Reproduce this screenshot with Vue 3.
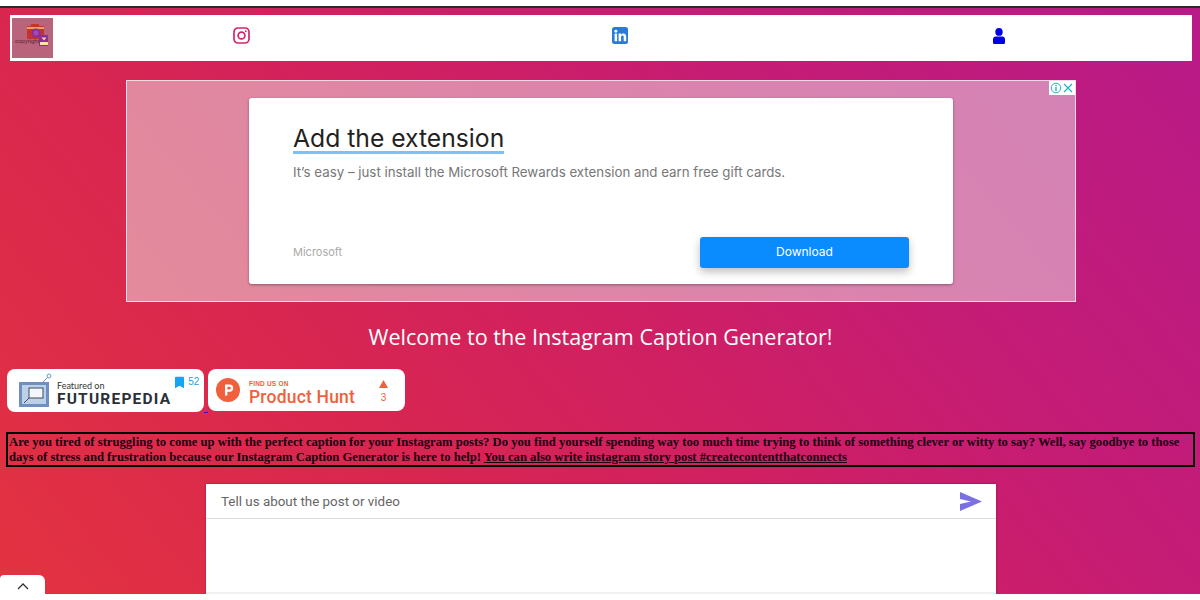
<template>
  <div class="page">
    <div class="top-strip"></div>
    <main class="main">
      <nav class="nav">
        <div class="logo">
          <svg width="41" height="40" viewBox="0 0 41 40">
            <rect x="15" y="8" width="17" height="13" rx="1" fill="#c8322c" />
            <rect x="19" y="6" width="8" height="3" fill="#c8322c" />
            <rect x="15" y="9" width="17" height="2" fill="#e8a25c" />
            <circle cx="24" cy="15" r="4.500" fill="#8a2f9a" />
            <circle cx="24" cy="15" r="2.500" fill="#a34ab0" />
            <rect x="27" y="17" width="9" height="11" fill="#8a2f9a" />
            <rect x="28" y="24" width="8" height="3" fill="#fbe3a8" />
            <path d="M29.500 19.500h5l-2.500 3z" fill="#f5d58a" />
            <text x="3" y="25" class="logo-text">copyright</text>
          </svg>
        </div>
        <div class="nav-item">
          <svg width="17" height="17" viewBox="0 0 17 17" fill="none" stroke="#d6246e" stroke-width="1.700">
            <rect x="1" y="1" width="15" height="15" rx="4" />
            <circle cx="8.500" cy="8.500" r="3.400" />
            <circle cx="12.800" cy="4.200" r=".9" fill="#d6246e" stroke="none" />
          </svg>
        </div>
        <div class="nav-item">
          <svg width="16" height="17" viewBox="0 0 16 17">
            <rect width="16" height="17" rx="2.500" fill="#2a79dc" />
            <rect x="2.600" y="6.600" width="2.500" height="7.600" fill="#fff" />
            <circle cx="3.850" cy="4.200" r="1.450" fill="#fff" />
            <path d="M6.600 6.600h2.400v1.100c.5-.8 1.300-1.300 2.400-1.300 2 0 2.800 1.300 2.800 3.400v4.400h-2.500v-4c0-1-.3-1.700-1.200-1.700-1 0-1.400.7-1.400 1.700v4H6.600z" fill="#fff" />
          </svg>
        </div>
        <div class="nav-item">
          <svg width="12" height="16" viewBox="0 0 12 16" fill="#0000e6">
            <ellipse cx="6" cy="3.900" rx="3.700" ry="3.900" />
            <path d="M2.600 8.400h6.800c1.500 0 2.600 1.200 2.600 2.800v3.200c0 .9-.6 1.600-1.500 1.600h-9C.6 16 0 15.300 0 14.400v-3.200c0-1.600 1.100-2.800 2.600-2.800z" />
          </svg>
        </div>
      </nav>

      <section class="ad">
        <div class="ad-badge">
          <svg width="12" height="12" viewBox="0 0 12 12" fill="none" stroke="#22b3c9">
            <circle cx="6" cy="6" r="4.800" />
            <path d="M6 5v4M6 3v1.200" stroke-width="1.400" />
          </svg>
          <svg width="12" height="12" viewBox="0 0 12 12" fill="none" stroke="#22b3c9" stroke-width="1.200">
            <path d="M2 2l8 8M10 2l-8 8" />
          </svg>
        </div>
        <div class="ad-card">
          <div class="ad-title"><span>Add the extension</span></div>
          <p class="ad-text">It’s easy – just install the Microsoft Rewards extension and earn free gift cards.</p>
          <div class="ad-foot">
            <span class="ad-brand">Microsoft</span>
            <button class="ad-btn">Download</button>
          </div>
        </div>
      </section>

      <h1 class="welcome">Welcome to the Instagram Caption Generator!</h1>

      <div class="badges">
        <div class="badge fp">
          <svg class="badge-icon" width="35" height="36" viewBox="0 0 35 36">
            <path d="M24 10l6-6" stroke="#6f9bc9" stroke-width="1" />
            <circle cx="31" cy="3" r="2" fill="none" stroke="#6f9bc9" />
            <rect x="1" y="9" width="30" height="25" fill="#6f8fc4" />
            <rect x="4" y="12" width="24" height="19" fill="#bcd0e8" />
            <rect x="11" y="15" width="14" height="10" fill="#f3f6fb" stroke="#3f4a5c" />
            <path d="M11 25l-5 5" stroke="#3f4a5c" />
          </svg>
          <div class="fp-copy">
            <span class="fp-small">Featured on</span>
            <span class="fp-big">FUTUREPEDIA</span>
          </div>
          <div class="fp-count">
            <svg width="9" height="13" viewBox="0 0 10 13"><path d="M0 1a1 1 0 0 1 1-1h8a1 1 0 0 1 1 1v12L5 10l-5 3z" fill="#1aa3f0" /></svg>
            <span>52</span>
          </div>
        </div>
        <span class="link-dot"></span>
        <div class="badge ph">
          <svg class="badge-icon" width="24" height="24" viewBox="0 0 24 24">
            <circle cx="12" cy="12" r="12" fill="#f0603c" />
            <path d="M9 6.500h4.600a3.600 3.600 0 0 1 0 7.200H11.400v3.800H9zM11.400 8.800v2.600h2.200a1.300 1.300 0 0 0 0-2.600z" fill="#fff" fill-rule="evenodd" />
          </svg>
          <div class="ph-copy">
            <span class="ph-small">FIND US ON</span>
            <span class="ph-big">Product Hunt</span>
          </div>
          <div class="ph-vote">
            <svg width="9" height="8" viewBox="0 0 9 8"><path d="M4.500 0L9 8H0z" fill="#f0603c" /></svg>
            <span>3</span>
          </div>
        </div>
      </div>

      <p class="intro">
        Are you tired of struggling to come up with the perfect caption for your Instagram posts? Do you find yourself spending way too much time trying to think of something clever or witty to say? Well, say goodbye to those days of stress and frustration because our Instagram Caption Generator is here to help!
        <u>You can also write instagram story post #createcontentthatconnects</u>
      </p>

      <div class="prompt">
        <div class="prompt-head">
          <span>Tell us about the post or video</span>
          <svg width="22" height="19" viewBox="0 0 22 19"><path d="M0 0l22 9.500L0 19v-7l11-2.500L0 7z" fill="#7b6fe6" /></svg>
        </div>
      </div>

      <div class="tab">
        <svg width="12" height="7" viewBox="0 0 12 7" fill="none" stroke="#333" stroke-width="1.300"><path d="M1 6l5-5 5 5" /></svg>
      </div>
    </main>
    <div class="bottom-strip"></div>
  </div>
</template>

<script setup>
</script>

<style>
html, body { margin: 0; background: #fff; }
</style>

<style scoped>
.page {
  width: 1200px;
  height: 600px;
  overflow: hidden;
  display: flex;
  flex-direction: column;
  font-family: "Liberation Sans", sans-serif;
}

.top-strip {
  height: 6px;
  background: #fff;
  border-bottom: 2px solid #2b2b2b;
  flex: none;
}

.bottom-strip {
  height: 6px;
  background: #fff;
  flex: none;
}

.main {
  flex: 1;
  position: relative;
  overflow: hidden;
  padding: 7px 5px 0 6px;
  background: linear-gradient(50deg, #e33340 0%, #d82650 30%, #d02062 50%, #c51c75 70%, #b81a88 100%);
  display: flex;
  flex-direction: column;
}

.nav {
  height: 46px;
  margin: 0 3px 0 4px;
  background: #fff;
  display: flex;
  align-items: center;
  flex: none;
}

.logo {
  width: 41px;
  height: 40px;
  margin-left: 2px;
  background: #b9647a;
  flex: none;
}

.logo-text {
  font-size: 6px;
  fill: #5a2030;
  font-family: "Liberation Sans", sans-serif;
}

.nav-item {
  display: flex;
  justify-content: center;
  align-items: center;
  padding-bottom: 5px;
}

.nav-item:nth-child(2) { margin-left: 180px; }
.nav-item:nth-child(3) { margin-left: 362px; }
.nav-item:nth-child(4) { margin-left: 365px; }

.ad {
  position: relative;
  width: 948px;
  height: 220px;
  margin: 19px 0 0 120px;
  background: rgba(235, 235, 235, 0.5);
  border: 1px solid rgba(255, 255, 255, 0.7);
  display: flex;
  justify-content: center;
  align-items: center;
  flex: none;
}

.ad-badge {
  position: absolute;
  top: 0;
  right: 0;
  display: flex;
  padding: 1px;
  background: #fff;
}

.ad-card {
  width: 704px;
  height: 186px;
  box-sizing: border-box;
  padding: 27px 44px 16px 44px;
  background: #fff;
  border-radius: 3px;
  box-shadow: 0 1px 3px rgba(0, 0, 0, 0.35);
  display: flex;
  flex-direction: column;
  font-family: Inter, sans-serif;
}

.ad-title span {
  display: inline-block;
  font-size: 24.700px;
  line-height: 26px;
  color: #222;
  border-bottom: 3px solid #7cc0f5;
}

.ad-text {
  margin: 9px 0 0;
  font-size: 13.300px;
  line-height: 18px;
  color: #777;
}

.ad-foot {
  margin-top: auto;
  display: flex;
  justify-content: space-between;
  align-items: center;
}

.ad-brand {
  font-size: 11px;
  color: #aaa;
  margin-top: -2px;
}

.ad-btn {
  width: 209px;
  height: 31px;
  border: 0;
  padding: 0 0 2px;
  border-radius: 3px;
  background: #0a8cff;
  box-shadow: 0 4px 8px rgba(0, 0, 0, 0.25);
  color: #fff;
  font-family: Inter, sans-serif;
  font-size: 12px;
}

.welcome {
  margin: 20px 0 0;
  text-align: center;
  font-family: "Open Sans", sans-serif;
  font-weight: 500;
  font-size: 21.600px;
  line-height: 30px;
  color: #fff;
  flex: none;
}

.badges {
  margin: 17px 0 0 1px;
  display: flex;
  flex: none;
}

.link-dot {
  width: 4px;
  height: 1px;
  align-self: flex-end;
  margin-bottom: -1px;
  background: #2020c0;
}

.badge {
  background: #fff;
  border-radius: 8px;
  display: flex;
  align-items: center;
  box-sizing: border-box;
}

.badge-icon {
  flex: none;
}

.fp {
  width: 197px;
  height: 43px;
  padding: 0 10px 0 11px;
  gap: 4px;
}

.fp-copy,
.ph-copy {
  display: flex;
  flex-direction: column;
}

.fp-copy {
  padding-top: 6px;
}

.ph-copy {
  padding-top: 5px;
}

.fp-small {
  font-family: Lato, sans-serif;
  font-size: 9px;
  line-height: 11px;
  color: #333;
}

.fp-big {
  font-family: Roboto, sans-serif;
  font-weight: 700;
  font-size: 15.500px;
  line-height: 16px;
  letter-spacing: 1.200px;
  color: #2b3038;
}

.fp-count {
  margin-left: auto;
  align-self: flex-start;
  margin-top: 7px;
  display: flex;
  align-items: flex-start;
  gap: 4px;
  font-size: 10px;
  color: #1aa3f0;
}

.ph {
  width: 197px;
  height: 42px;
  padding: 0 17px 0 8px;
  gap: 9px;
}

.ph-small {
  font-size: 6.500px;
  line-height: 8px;
  letter-spacing: .2px;
  font-weight: 700;
  color: #f0603c;
}

.ph-big {
  font-family: Roboto, sans-serif;
  font-weight: 500;
  font-size: 17.500px;
  line-height: 18px;
  letter-spacing: .2px;
  color: #f0603c;
}

.ph-vote {
  margin-left: auto;
  padding-top: 2px;
  display: flex;
  flex-direction: column;
  align-items: center;
  gap: 4px;
  font-size: 10px;
  color: #f0603c;
}

.intro {
  margin: 20px 0 0;
  border: 2px solid #000;
  padding: 1px 1px 0;
  font-family: "Liberation Serif", serif;
  font-weight: 700;
  font-size: 12.650px;
  line-height: 15px;
  color: #1a0010;
  flex: none;
}

.prompt {
  width: 790px;
  margin: 17px 0 0 200px;
  height: 110px;
  box-sizing: border-box;
  border-bottom: 2px solid #f1f1f1;
  background: #fff;
  box-shadow: 0 0 2px rgba(100, 0, 50, 0.5);
  flex: none;
}

.prompt-head {
  height: 34px;
  padding: 0 14px 0 15px;
  border-bottom: 1px solid #ddd;
  display: flex;
  align-items: center;
  justify-content: space-between;
  font-family: Roboto, sans-serif;
  font-size: 13.400px;
  color: #666;
}

.tab {
  position: absolute;
  left: 0;
  bottom: 0;
  width: 45px;
  height: 19px;
  padding-bottom: 4px;
  box-sizing: border-box;
  background: #fff;
  border-radius: 4px 6px 0 0;
  display: flex;
  align-items: flex-end;
  justify-content: center;
}
</style>
